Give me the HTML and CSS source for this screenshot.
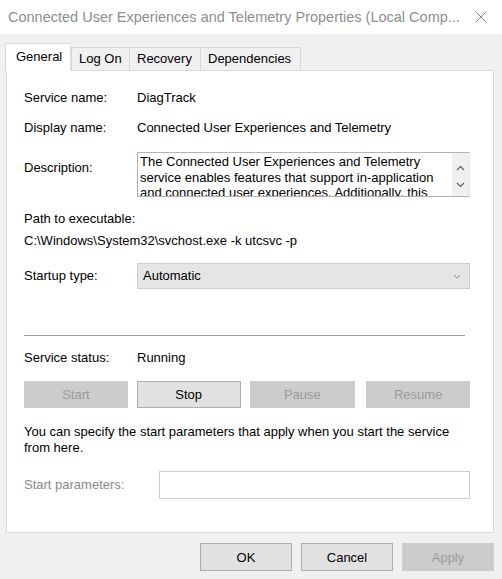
FILE: index.html
```html
<!DOCTYPE html>
<html>
<head>
<meta charset="utf-8">
<link rel="stylesheet" href="styles.css">
</head>
<body>
<div class="window">
  <div class="titlebar">
    <span class="title">Connected User Experiences and Telemetry Properties (Local Comp...</span>
    <svg class="close" width="12" height="12" viewBox="0 0 12 12"><path d="M0.5 0.5 L11.5 11.5 M11.5 0.5 L0.5 11.5" stroke="#8a8a8a" stroke-width="1" fill="none"/></svg>
  </div>
  <div class="client">
    <div class="tabs">
      <div class="tab active">General</div>
      <div class="tab">Log On</div>
      <div class="tab">Recovery</div>
      <div class="tab">Dependencies</div>
    </div>
    <div class="panel">
      <div class="row r1"><div class="label">Service name:</div><div class="value">DiagTrack</div></div>
      <div class="row r2"><div class="label">Display name:</div><div class="value">Connected User Experiences and Telemetry</div></div>
      <div class="row desc">
        <div class="label dlabel">Description:</div>
        <div class="textbox">
          <div class="textbox-text">The Connected User Experiences and Telemetry service enables features that support in-application and connected user experiences. Additionally, this service manages the event driven collection and transmission of diagnostic and usage information.</div>
          <div class="vscroll">
            <svg width="9" height="6" viewBox="0 0 9 6"><path d="M1 5 L4.5 1.5 L8 5" stroke="#606060" stroke-width="1.2" fill="none"/></svg>
            <svg width="9" height="6" viewBox="0 0 9 6"><path d="M1 1 L4.5 4.5 L8 1" stroke="#606060" stroke-width="1.2" fill="none"/></svg>
          </div>
        </div>
      </div>
      <div class="pathlabel">Path to executable:</div>
      <div class="path">C:\Windows\System32\svchost.exe -k utcsvc -p</div>
      <div class="row startup">
        <div class="label">Startup type:</div>
        <div class="select">
          <span>Automatic</span>
          <svg width="8" height="5" viewBox="0 0 8 5"><path d="M1 1 L4 4 L7 1" stroke="#8a8a8a" stroke-width="1" fill="none"/></svg>
        </div>
      </div>
      <div class="separator"></div>
      <div class="row status"><div class="label">Service status:</div><div class="value">Running</div></div>
      <div class="buttons">
        <div class="btn disabled b-start">Start</div>
        <div class="btn b-stop">Stop</div>
        <div class="btn disabled b-pause">Pause</div>
        <div class="btn disabled b-resume">Resume</div>
      </div>
      <p class="note">You can specify the start parameters that apply when you start the service from here.</p>
      <div class="row params">
        <div class="plabel">Start parameters:</div>
        <div class="input"></div>
      </div>
    </div>
    <div class="footer">
      <div class="fbtn">OK</div>
      <div class="fbtn">Cancel</div>
      <div class="fbtn fdisabled">Apply</div>
    </div>
  </div>
</div>
</body>
</html>
```

FILE: styles.css
```css
html, body {
  margin: 0;
  padding: 0;
  background: #f0f0f0;
}
body {
  font-family: "Liberation Sans", Arial, sans-serif;
  font-size: 13px;
  color: #000;
}
.window {
  width: 502px;
  height: 579px;
  background: #f0f0f0;
  overflow: hidden;
}
.titlebar {
  height: 34px;
  background: #ffffff;
  display: flex;
  align-items: center;
  justify-content: space-between;
  padding: 0 15px 0 8px;
  box-sizing: border-box;
}
.title {
  font-size: 14.5px;
  color: #8e8e8e;
  white-space: nowrap;
  padding-bottom: 1px;
}
.tabs {
  display: flex;
  align-items: flex-end;
  height: 27px;
  position: relative;
  z-index: 1;
}
.client {
  padding: 9px 8px 0 6px;
}
.tab {
  height: 23px;
  line-height: 22px;
  padding: 0 7px;
  background: #f0f0f0;
  border: 1px solid #d9d9d9;
  border-bottom: none;
  box-sizing: border-box;
  margin-left: -1px;
}
.tab.active {
  height: 28px;
  line-height: 26px;
  background: #ffffff;
  padding: 0 10px;
  margin-left: -1px;
  margin-right: 1px;
  margin-bottom: -1px;
  width: 66px;
}
.tab:nth-child(2) { width: 59px; }
.tab:nth-child(3) { width: 72px; }
.tab:nth-child(4) { width: 101px; }
.panel {
  background: #ffffff;
  border: 1px solid #d9d9d9;
  width: 488px;
  height: 463px;
  box-sizing: border-box;
  padding: 19px 23px 0 17px;
}
.row {
  display: flex;
  align-items: center;
  line-height: 16px;
}
.label {
  width: 113px;
  flex: none;
}
.r2 { margin-top: 14px; }
.desc {
  margin-top: 16px;
  align-items: flex-start;
}
.dlabel {
  margin-top: 8px;
}
.textbox {
  width: 333px;
  height: 45px;
  border: 1px solid #b4b4b4;
  border-right-color: #e8e8e8;
  box-sizing: border-box;
  display: flex;
  overflow: hidden;
  background: #fff;
}
.textbox-text {
  flex: 1;
  padding: 1px 4px 0 2px;
  line-height: 15.5px;
  overflow: hidden;
}
.vscroll {
  width: 17px;
  flex: none;
  background: #f0f0f0;
  display: flex;
  flex-direction: column;
  align-items: center;
  justify-content: space-between;
  padding: 12px 0 8px;
  box-sizing: border-box;
}
.pathlabel {
  margin-top: 14px;
  line-height: 16px;
}
.path {
  margin-top: 6px;
  line-height: 16px;
}
.startup {
  margin-top: 14px;
}
.select {
  width: 334px;
  height: 26px;
  background: #e5e5e5;
  border: 1px solid #cccccc;
  box-sizing: border-box;
  display: flex;
  align-items: center;
  justify-content: space-between;
  padding: 0 8px 0 5px;
}
.separator {
  margin-top: 46px;
  width: 441px;
  height: 1px;
  background: #a0a0a0;
}
.status {
  margin-top: 14px;
}
.buttons {
  margin-top: 15px;
  display: flex;
}
.btn {
  height: 27px;
  box-sizing: border-box;
  display: flex;
  align-items: center;
  justify-content: center;
  border: 1px solid #cccccc;
  background: #cccccc;
}
.btn.disabled {
  color: #9b9b9b;
}
.b-start { width: 104px; }
.b-stop {
  width: 104px;
  margin-left: 9px;
  background: #e1e1e1;
  border-color: #adadad;
}
.b-pause { width: 106px; margin-left: 9px; }
.b-resume { width: 104px; margin-left: 11px; }
.note {
  margin: 16px 0 0;
  line-height: 16px;
  width: 450px;
}
.params {
  margin-top: 15px;
}
.plabel {
  width: 135px;
  flex: none;
  color: #8a8a8a;
}
.input {
  width: 312px;
  height: 28px;
  border: 1px solid #cccccc;
  box-sizing: border-box;
  background: #fff;
}
.footer {
  display: flex;
  justify-content: flex-end;
  gap: 9px;
  margin-top: 10px;
}
.fbtn {
  width: 92px;
  height: 28px;
  box-sizing: border-box;
  border: 1px solid #adadad;
  background: #e1e1e1;
  display: flex;
  align-items: center;
  justify-content: center;
}
.fbtn.fdisabled {
  background: #cccccc;
  border-color: #cccccc;
  color: #9b9b9b;
}
```
